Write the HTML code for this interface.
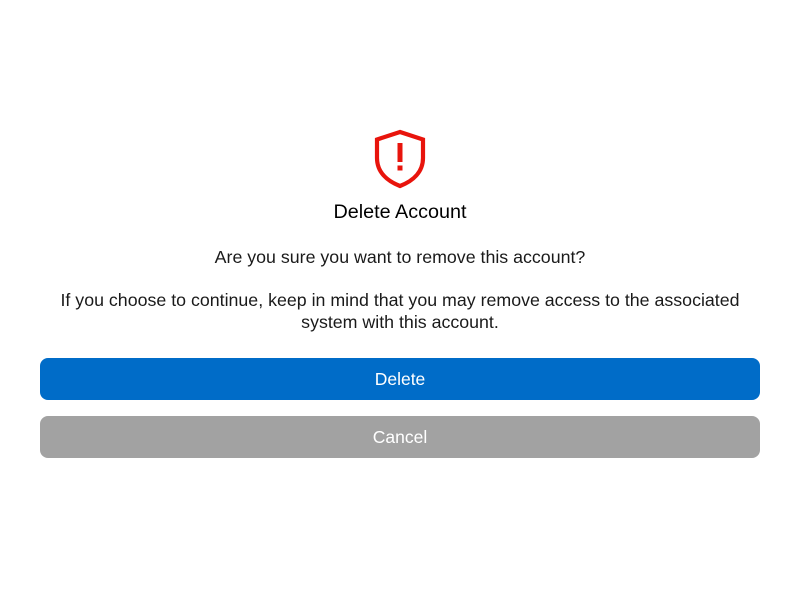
<!DOCTYPE html>
<html><head><meta charset="utf-8"><style>
body{margin:0;width:800px;height:600px;background:#fff;font-family:"Liberation Sans",sans-serif;position:relative;overflow:hidden}
.t{position:absolute;left:0;width:800px;text-align:center;color:#1a1a1a}
.btn{position:absolute;left:40px;width:720px;height:42px;border-radius:8px;color:#fff;font-size:17.5px;line-height:42px;text-align:center}
</style></head><body>
<svg style="position:absolute;left:370px;top:126px" width="60" height="66" viewBox="370 126 60 66">
<path d="M400 132 L377 139.5 V158 C377 172 387 181 400 186 C413 181 423 172 423 158 V139.5 Z" fill="none" stroke="#e8140c" stroke-width="4.2" stroke-linejoin="miter"/>
<rect x="397.5" y="143" width="5" height="19" fill="#e8140c"/>
<rect x="397.5" y="165.5" width="5" height="5" fill="#e8140c"/>
</svg>
<div class="t" style="top:201px;font-size:19.8px;color:#000">Delete Account</div>
<div class="t" style="top:247px;font-size:17.8px">Are you sure you want to remove this account?</div>
<div class="t" style="top:289px;font-size:17.8px;line-height:22px">If you choose to continue, keep in mind that you may remove access to the associated<br>system with this account.</div>
<div class="btn" style="top:358px;background:#006cc8">Delete</div>
<div class="btn" style="top:416px;background:#a2a2a2">Cancel</div>
</body></html>
